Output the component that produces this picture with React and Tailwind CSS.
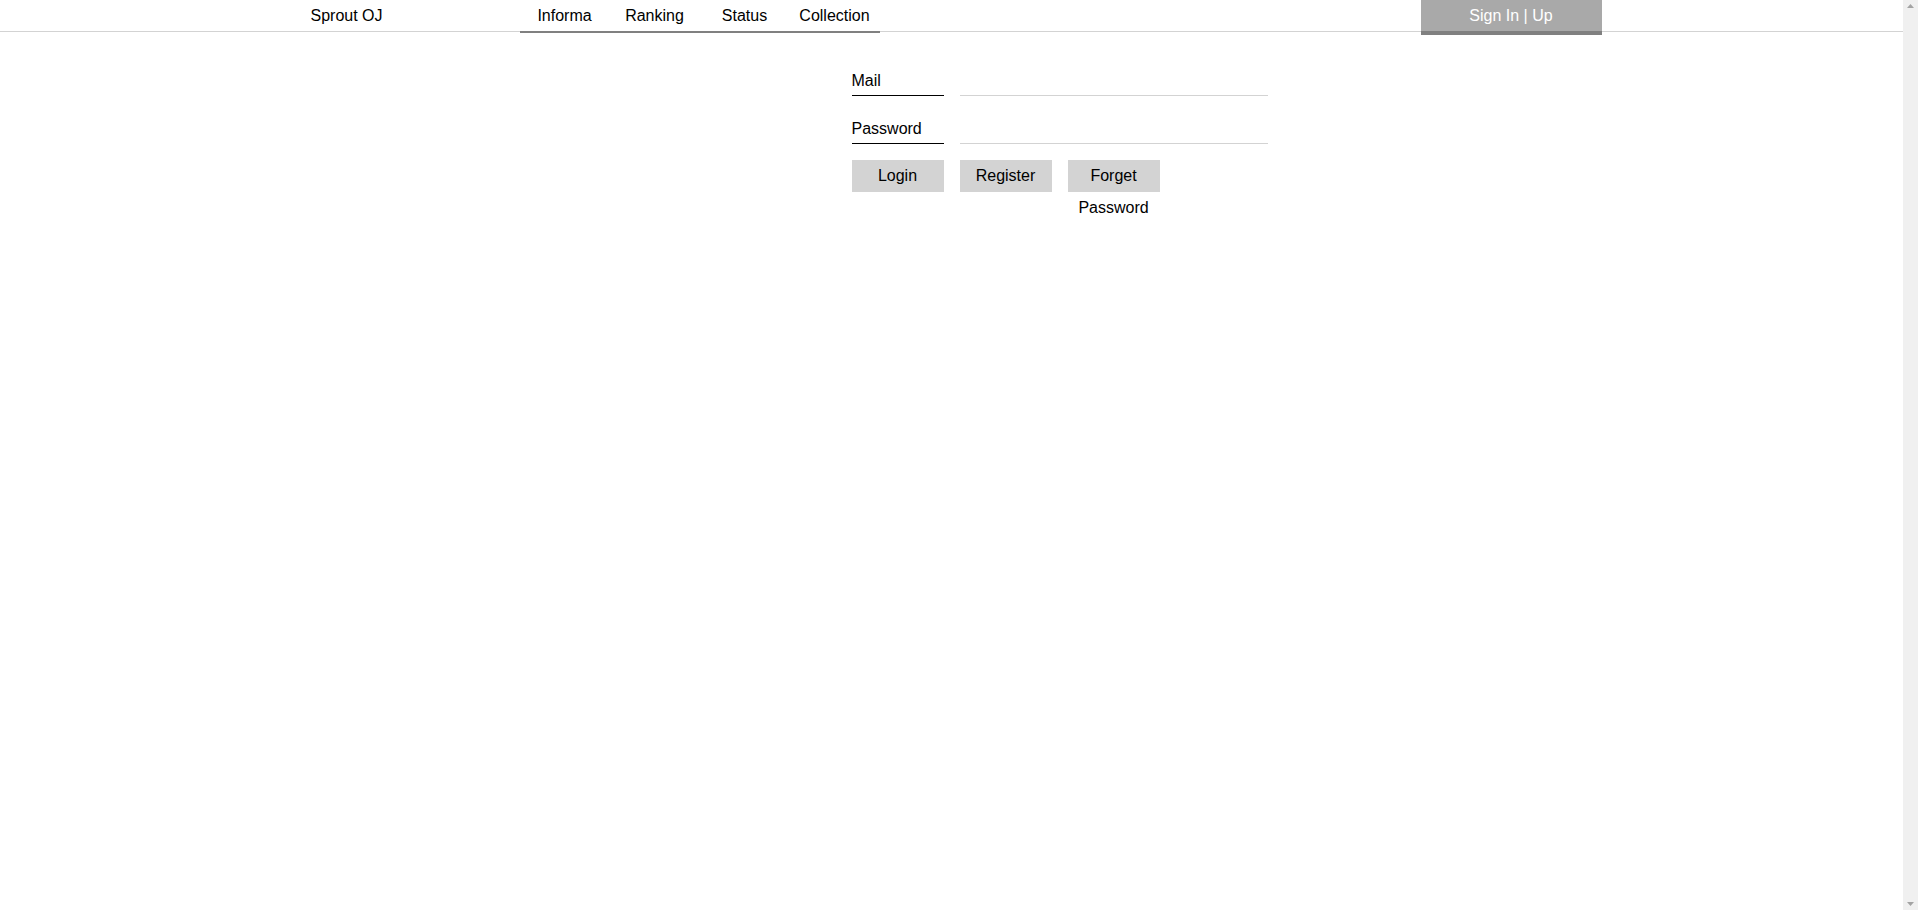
import React from 'react';

const navItems = ["Informa", "Ranking", "Status", "Collection"];

const App = () => {
  return (
    <div className="h-screen flex bg-white text-black font-['Liberation_Sans',Arial,sans-serif] text-[16px]">
      <div className="flex-1">
        {/* Header */}
        <div className="h-[32px] border-b border-[#d3d3d3]">
          <div className="w-[1300px] mx-auto flex items-start">
            <div className="w-[90px] text-center leading-[31px]">Sprout OJ</div>

            <div className="ml-[128px] flex h-[33px] border-b-2 border-[#808080]">
              {navItems.map((item) => (
                <div key={item} className="w-[90px] text-center leading-[31px]">
                  {item}
                </div>
              ))}
            </div>

            <div className="ml-auto w-[181px] h-[35px] bg-[#a9a9a9] border-b-4 border-[#808080] text-white text-center leading-[31px]">
              Sign In | Up
            </div>
          </div>
        </div>

        {/* Login form */}
        <div className="w-[1300px] mx-auto">
          <div className="ml-[550px] pt-[35px] w-[416px]">
            <div className="flex gap-4">
              <div className="w-[92px] h-[29px] leading-[27px] border-b border-black">Mail</div>
              <div className="flex-1 h-[29px] border-b border-[#d3d3d3]"></div>
            </div>

            <div className="flex gap-4 mt-[19px]">
              <div className="w-[92px] h-[29px] leading-[27px] border-b border-black">Password</div>
              <div className="flex-1 h-[29px] border-b border-[#d3d3d3]"></div>
            </div>

            <div className="flex gap-4 mt-[16px]">
              <div className="w-[92px] h-[32px] leading-[32px] bg-[#d3d3d3] text-center">Login</div>
              <div className="w-[92px] h-[32px] leading-[32px] bg-[#d3d3d3] text-center">Register</div>
              <div className="w-[92px] h-[32px] leading-[32px] bg-[#d3d3d3] text-center">Forget Password</div>
            </div>
          </div>
        </div>
      </div>

      {/* Scrollbar track */}
      <div className="w-[15px] bg-[#f0f0f0] flex flex-col justify-between items-center py-[4px]">
        <svg width="7" height="4" viewBox="0 0 7 4">
          <path d="M3.5 0 L7 4 L0 4 Z" fill="#a3a3a3" />
        </svg>
        <svg width="7" height="4" viewBox="0 0 7 4">
          <path d="M0 0 L7 0 L3.5 4 Z" fill="#a3a3a3" />
        </svg>
      </div>
    </div>
  );
};

export default App;
